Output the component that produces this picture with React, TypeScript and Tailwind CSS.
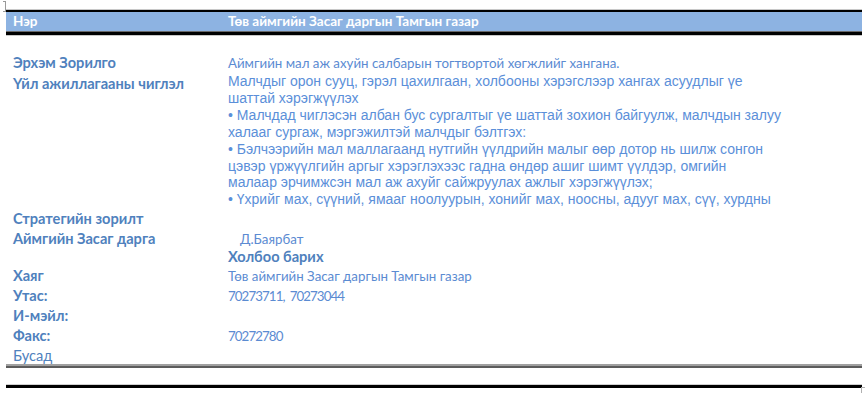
import React from "react";

const label = "text-[#4f81bd] font-bold text-[14.6px] font-['Lato','Noto_Sans',sans-serif] whitespace-nowrap";
const value = "text-[#5b8bd2] text-[13.3px] font-['Lato','Noto_Sans',sans-serif] whitespace-nowrap";
const digits = `${value} tracking-[-0.9px]`;

const activityLines = [
  "Малчдыг орон сууц, гэрэл цахилгаан, холбооны хэрэгслээр хангах асуудлыг үе",
  "шаттай хэрэгжүүлэх",
  "• Малчдад чиглэсэн албан бус сургалтыг үе шаттай зохион байгуулж, малчдын залуу",
  "халааг сургаж, мэргэжилтэй малчдыг бэлтгэх:",
  "• Бэлчээрийн мал маллагаанд нутгийн үүлдрийн малыг өөр дотор нь шилж сонгон",
  "цэвэр үржүүлгийн аргыг хэрэглэхээс гадна өндөр ашиг шимт үүлдэр, омгийн",
  "малаар эрчимжсэн мал аж ахуйг сайжруулах ажлыг хэрэгжүүлэх;",
  "• Үхрийг мах, сүүний, ямааг ноолуурын, хонийг мах, ноосны, адууг мах, сүү, хурдны",
];

function Row({
  h,
  left,
  right,
}: {
  h: string;
  left?: React.ReactNode;
  right?: React.ReactNode;
}) {
  return (
    <div className={`flex items-center ${h}`}>
      <div className="w-[222px] pl-[7px]">{left}</div>
      <div className="flex-1">{right}</div>
    </div>
  );
}

export default function App() {
  return (
    <div className="relative w-[868px] h-[394px] bg-white overflow-hidden">
      {/* corner marks of the document frame */}
      <div className="absolute left-[3px] top-[1px] w-[3px] h-[11px] border-r border-t border-b border-[#9a9a9a]" />
      <div className="absolute left-[861px] top-[387px] w-[4px] h-[6px] border-l border-t border-[#b0b0b0]" />

      <div className="ml-[6px] w-[856px] pt-[9px]">
        {/* header rule + title band */}
        <div className="h-px bg-[#c8c8c8]" />
        <div className="h-[2px] bg-black" />
        <div className="h-[19px] bg-[#8db3e2] flex items-center text-white font-bold text-[13.5px] font-['Lato','Noto_Sans',sans-serif]">
          <div className="w-[222px] pl-[7px]">Нэр</div>
          <div>Төв аймгийн Засаг даргын Тамгын газар</div>
        </div>
        <div className="h-px bg-[#6a6a6a]" />
        <div className="h-[3px] bg-black" />
        <div className="h-px bg-[#c8c8c8]" />

        <div className="pt-[16px]">
          <Row
            h="h-[20px]"
            left={<span className={label}>Эрхэм Зорилго</span>}
            right={
              <span className={value}>
                Аймгийн мал аж ахуйн салбарын тогтвортой хөгжлийг хангана.
              </span>
            }
          />
          <div className="flex items-start pt-px">
            <div className="w-[222px] pl-[7px] pt-[2px] leading-[17px]">
              <span className={label}>Үйл ажиллагааны чиглэл</span>
            </div>
            <div className="flex-1 text-[14px] leading-[16.9px] text-[#5b8fd9] font-['Liberation_Sans',Arial,sans-serif]">
              {activityLines.map((l) => (
                <div key={l} className="whitespace-nowrap">
                  {l}
                </div>
              ))}
            </div>
          </div>
          <Row h="h-[20px]" left={<span className={label}>Стратегийн зорилт</span>} />
          <Row
            h="h-[19px]"
            left={<span className={label}>Аймгийн Засаг дарга</span>}
            right={<span className={`${value} pl-[12px] text-[#4f81bd]`}>Д.Баярбат</span>}
          />
          <Row
            h="h-[18px]"
            right={<span className={label}>Холбоо барих</span>}
          />
          <Row
            h="h-[20px]"
            left={<span className={label}>Хаяг</span>}
            right={<span className={value}>Төв аймгийн Засаг даргын Тамгын газар</span>}
          />
          <Row
            h="h-[20px]"
            left={<span className={label}>Утас:</span>}
            right={<span className={digits}>70273711,&nbsp; 70273044</span>}
          />
          <Row h="h-[20px]" left={<span className={label}>И-мэйл:</span>} />
          <Row
            h="h-[20px]"
            left={<span className={label}>Факс:</span>}
            right={<span className={digits}>70272780</span>}
          />
          <Row
            h="h-[19px]"
            left={
              <span className="text-[#4f81bd] text-[14.6px] font-['Lato','Noto_Sans',sans-serif]">
                Бусад
              </span>
            }
          />
        </div>

        {/* closing double rule */}
        <div className="h-[2px] bg-[#a0a0a0]" />
        <div className="h-[2px] bg-[#5c5c5c]" />
        <div className="h-[16px]" />
        <div className="h-px bg-[#d0d0d0]" />
        <div className="h-[3px] bg-black" />
      </div>
    </div>
  );
}
